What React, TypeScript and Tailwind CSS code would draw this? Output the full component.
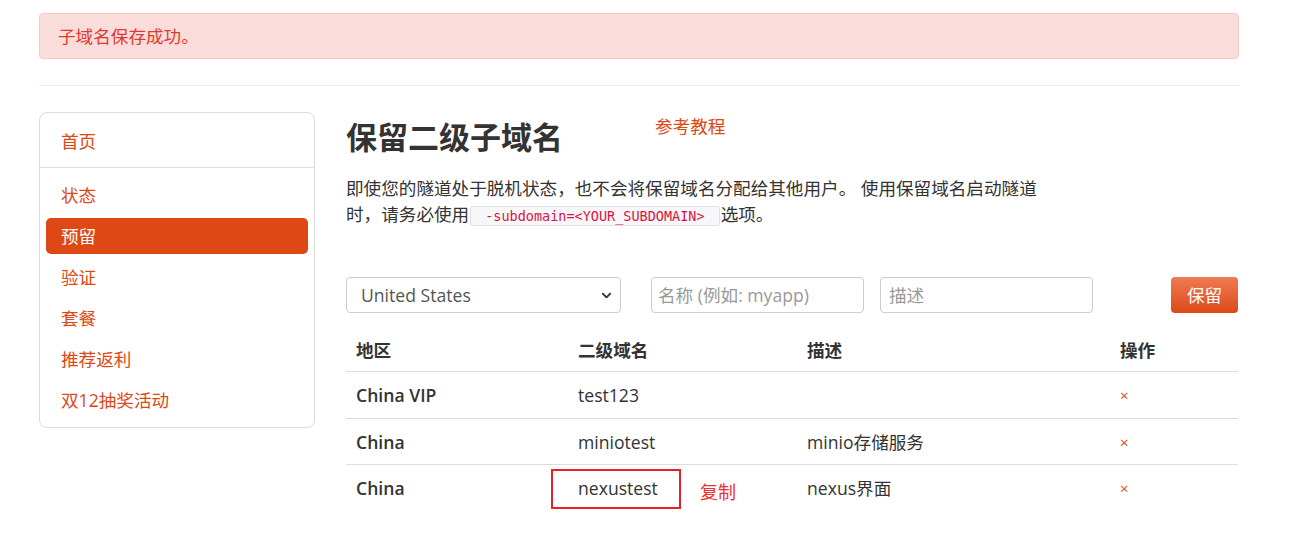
import { ChevronDown } from 'lucide-react';

const font = { fontFamily: '"Open Sans", "Noto Sans CJK SC", sans-serif' };

const navItems = ['状态', '预留', '验证', '套餐', '推荐返利', '双12抽奖活动'];

const rows = [
  { region: 'China VIP', sub: 'test123', desc: '' },
  { region: 'China', sub: 'miniotest', desc: 'minio存储服务' },
  { region: 'China', sub: 'nexustest', desc: 'nexus界面', marked: true },
];

export default function App() {
  return (
    <div className="h-[537px] w-[1307px] overflow-hidden bg-white text-[17.6px] text-[#333]" style={font}>
      <div className="ml-[39px] w-[1200px] pt-[13px]">
        {/* alert */}
        <div className="flex h-[46px] items-center rounded-[4px] border border-[#f8c9c5] bg-[#fadddb] pl-[18px] text-[#e03a2e]">
          子域名保存成功。
        </div>
        <div className="mt-[26px] border-t border-[#eeeeee]" />

        <div className="mt-[26px] flex items-start">
          {/* sidebar */}
          <div className="w-[276px] rounded-[8px] border border-[#dddddd] text-[#dd4814]">
            <div className="flex h-[55px] items-center border-b border-[#dddddd] pl-[21px] pt-[2px]">首页</div>
            <div className="flex flex-col gap-[5px] px-[6px] pb-[9px] pt-[9px]">
              {navItems.map(label => (
                <div
                  key={label}
                  className={`flex h-[36px] items-center rounded-[5px] pl-[15px] ${label === '预留' ? 'bg-[#dd4814] text-white' : ''}`}
                >
                  {label}
                </div>
              ))}
            </div>
          </div>

          {/* main */}
          <div className="ml-[31px] w-[892px]">
            <div className="flex items-start">
              <h1 className="mt-[8px] text-[31px] font-bold leading-[34px] text-[#333]">保留二级子域名</h1>
              <a className="ml-[92px] mt-[1px] text-[#dd4814]">参考教程</a>
            </div>
            <p className="mt-[21px] w-[700px] leading-[26px]">
              即使您的隧道处于脱机状态，也不会将保留域名分配给其他用户。 使用保留域名启动隧道时，请务必使用
              <code className="mx-[1px] rounded-[3px] border border-[#e1e1e8] bg-[#f7f7f9] px-[14px] py-[1px] text-[13.5px] text-[#dd1144]" style={{ fontFamily: '"DejaVu Sans Mono", monospace' }}>
                -subdomain=&lt;YOUR_SUBDOMAIN&gt;
              </code>
              选项。
            </p>

            {/* form */}
            <div className="mt-[48px] flex h-[36px] items-stretch">
              <div className="flex w-[275px] items-center justify-between rounded-[4px] border border-[#cccccc] pl-[14px] pr-[6px] text-[#555]">
                <span>United States</span>
                <ChevronDown size={15} strokeWidth={3} className="text-[#333]" />
              </div>
              <div className="ml-[30px] flex w-[213px] items-center rounded-[4px] border border-[#cccccc] pl-[6px] text-[#999]">名称 (例如: myapp)</div>
              <div className="ml-[16px] flex w-[213px] items-center rounded-[4px] border border-[#cccccc] pl-[8px] text-[#999]">描述</div>
              <button className="ml-[78px] w-[67px] rounded-[4px] bg-gradient-to-b from-[#ef7a52] to-[#dd4814] text-white">保留</button>
            </div>

            {/* table */}
            <div className="mt-[15px]">
              <div className="grid h-[44px] grid-cols-[222px_229px_313px_128px] items-center border-b border-[#dddddd] font-bold">
                <div className="pl-[10px] pt-[2px]">地区</div>
                <div className="pl-[10px] pt-[2px]">二级域名</div>
                <div className="pl-[10px] pt-[2px]">描述</div>
                <div className="pl-[10px] pt-[2px]">操作</div>
              </div>
              {rows.map((r, i) => (
                <div key={i} className={`grid h-[46px] grid-cols-[222px_229px_313px_128px] items-center ${i > 0 ? 'border-t border-[#dddddd]' : ''}`}>
                  <div className="pl-[10px] font-semibold">{r.region}</div>
                  <div className="relative h-full pl-[10px] leading-[46px]">
                    {r.sub}
                    {r.marked && (
                      <>
                        <div className="absolute left-[-17px] top-[4px] h-[40px] w-[130px] border-2 border-[#e8202a]" />
                        <span className="absolute left-[132px] top-[4px] text-[18px] text-[#f0302f]">复制</span>
                      </>
                    )}
                  </div>
                  <div className="pl-[10px]">{r.desc}</div>
                  <div className="pl-[10px] text-[15px] text-[#dd4814]">×</div>
                </div>
              ))}
            </div>
          </div>
        </div>
      </div>
    </div>
  );
}
